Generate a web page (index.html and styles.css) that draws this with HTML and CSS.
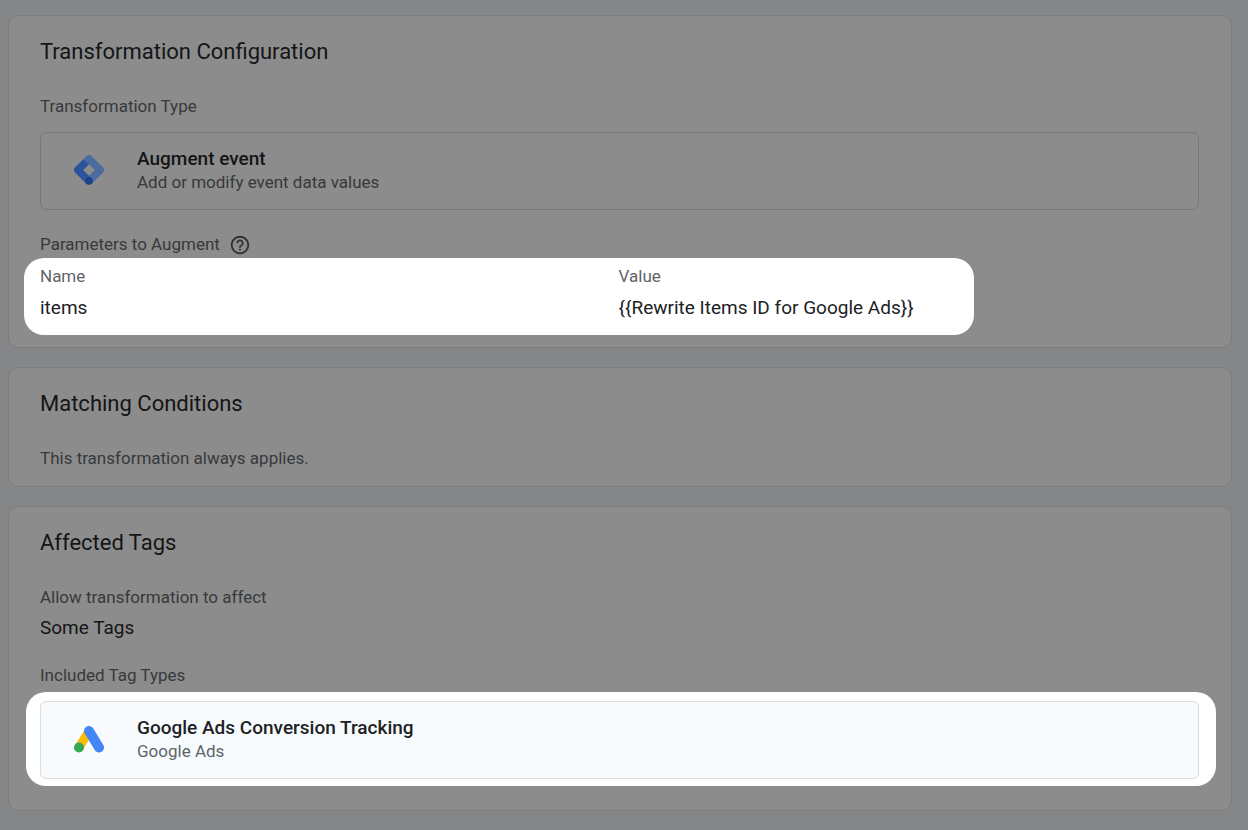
FILE: index.html
```html
<!DOCTYPE html>
<html lang="en">
<head>
    <meta charset="UTF-8">
    <meta name="viewport" content="width=device-width, initial-scale=1.0">
    <title>Transformation Configuration</title>
    <link rel="stylesheet" href="styles.css">
</head>
<body>
    <main class="page">
        <section class="card config-card">
            <h2>Transformation Configuration</h2>
            <p class="label">Transformation Type</p>
            <div class="type-box">
                <svg class="type-icon" viewBox="0 0 30 30" aria-hidden="true" fill="none" stroke-width="7.5" stroke-linejoin="round">
                    <path d="M10 8.800L15 3.800 26.200 15 15 26.200" stroke="#4b6c9f"/>
                    <path d="M12 6.800L3.800 15 15 26.200" stroke="#2b549d"/>
                    <circle cx="15" cy="26" r="3.800" fill="#1b4287"/>
                </svg>
                <div>
                    <h3>Augment event</h3>
                    <p class="sub">Add or modify event data values</p>
                </div>
            </div>
            <div class="label params-label">
                <span>Parameters to Augment</span>
                <button type="button" class="help" aria-label="Help">
                    <svg viewBox="0 0 24 24" aria-hidden="true">
                        <path d="M11 18h2v-2h-2v2zm1-16C6.48 2 2 6.48 2 12s4.48 10 10 10 10-4.48 10-10S17.52 2 12 2zm0 18c-4.41 0-8-3.59-8-8s3.59-8 8-8 8 3.59 8 8-3.59 8-8 8zm0-14c-2.21 0-4 1.79-4 4h2c0-1.1.9-2 2-2s2 .9 2 2c0 2-3 1.75-3 5h2c0-2.25 3-2.5 3-5 0-2.21-1.79-4-4-4z"/>
                    </svg>
                </button>
            </div>
            <div class="spotlight params">
                <table>
                    <thead>
                        <tr><th>Name</th><th>Value</th></tr>
                    </thead>
                    <tbody>
                        <tr><td>items</td><td>{{Rewrite Items ID for Google Ads}}</td></tr>
                    </tbody>
                </table>
            </div>
        </section>

        <section class="card conditions-card">
            <h2>Matching Conditions</h2>
            <p class="label">This transformation always applies.</p>
        </section>

        <section class="card tags-card">
            <h2>Affected Tags</h2>
            <p class="label">Allow transformation to affect</p>
            <p class="value">Some Tags</p>
            <p class="label included-label">Included Tag Types</p>
            <div class="spotlight tags">
                <div class="type-box">
                    <svg class="type-icon" viewBox="0 0 30 30" aria-hidden="true">
                        <path d="M15 7L5 23.500" stroke="#fbbc04" stroke-width="9" fill="none"/>
                        <path d="M15 7L25 23.500" stroke="#4285f4" stroke-width="10" stroke-linecap="round" fill="none"/>
                        <circle cx="5" cy="23.500" r="5" fill="#34a853"/>
                    </svg>
                    <div>
                        <h3>Google Ads Conversion Tracking</h3>
                        <p class="sub">Google Ads</p>
                    </div>
                </div>
            </div>
        </section>
    </main>
</body>
</html>
```
FILE: styles.css
```css
* {
    box-sizing: border-box;
}

body {
    margin: 0;
    background: #848688;
    color: #141516;
    font-family: Roboto, "Liberation Sans", sans-serif;
}

h2, h3, p {
    margin: 0;
    font-weight: 400;
}

.page {
    display: flex;
    flex-direction: column;
    gap: 19px;
    padding: 15px 16px 19px 8px;
}

.card {
    padding: 22px 32px 22px 31px;
    background: #8c8c8c;
    border: 1px solid #7a7d80;
    border-radius: 10px;
}

.config-card {
    padding-bottom: 12px;
}

.conditions-card {
    padding-bottom: 18px;
}

.tags-card {
    padding-bottom: 24px;
}

h2 {
    margin-bottom: 30px;
    font-size: 22px;
    line-height: 28px;
}

.label {
    color: #37393b;
    font-size: 17px;
    line-height: 20px;
}

.value {
    margin-top: 9px;
    font-size: 19px;
    line-height: 24px;
}

.type-box {
    display: flex;
    align-items: center;
    gap: 33px;
    padding: 14px 33px 16px;
    border: 1px solid #76797b;
    border-radius: 6px;
}

.config-card .type-box {
    margin-top: 16px;
}

.type-icon {
    width: 30px;
    height: 30px;
}

h3 {
    font-size: 19px;
    font-weight: 500;
    line-height: 24px;
}

.sub {
    color: #37393b;
    font-size: 17px;
    line-height: 22px;
}

.params-label {
    display: flex;
    align-items: center;
    gap: 9px;
    margin-top: 24px;
}

.help {
    width: 22px;
    height: 20px;
    padding: 0;
    background: none;
    border: none;
    cursor: pointer;
}

.help svg {
    display: block;
    width: 22px;
    height: 22px;
    fill: #303234;
}

.included-label {
    margin-top: 25px;
}

/* bright areas on the dimmed page */
.spotlight {
    background: #fff;
    border-radius: 20px;
    color: #202124;
}

.params {
    width: 82%;
    margin: 4px 0 0 -16px;
    padding: 8px 16px 15px;
}

.params table {
    width: 100%;
    border-collapse: collapse;
    table-layout: fixed;
}

.params th, .params td {
    padding: 0;
    text-align: left;
    font-weight: 400;
}

.params th:first-child {
    width: 63%;
}

.params th {
    padding-bottom: 10px;
    color: #5f6368;
    font-size: 17px;
    line-height: 20px;
}

.params td {
    font-size: 19px;
    line-height: 24px;
}

.tags {
    margin: 7px -17px 0 -14px;
    padding: 9px 17px 7px 14px;
}

.tags .type-box {
    background: #f7fbfd;
    border-color: #dadce0;
}

.tags .sub {
    color: #5f6368;
}
```
